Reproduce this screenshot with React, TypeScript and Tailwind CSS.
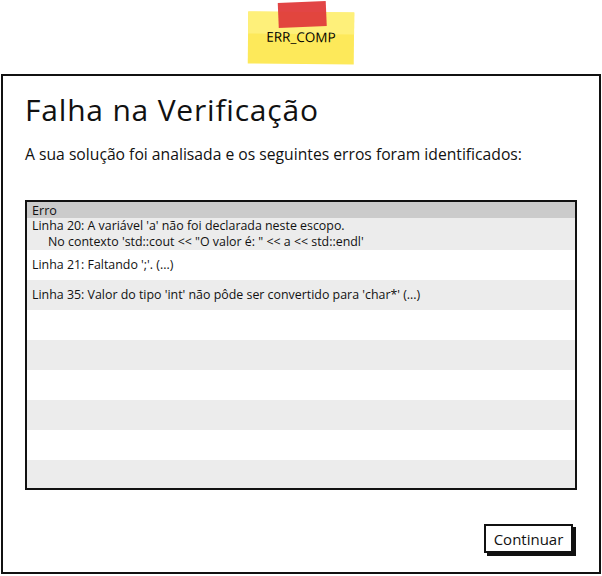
import React from "react";

type Row = { lines: string[]; shaded: boolean; height: string };

const rows: Row[] = [
  {
    lines: [
      "Linha 20: A variável 'a' não foi declarada neste escopo.",
      "No contexto 'std::cout << \"O valor é: \" << a << std::endl'",
    ],
    shaded: true,
    height: "h-[32px]",
  },
  { lines: ["Linha 21: Faltando ';'. (...)"], shaded: false, height: "h-[30px]" },
  {
    lines: ["Linha 35: Valor do tipo 'int' não pôde ser convertido para 'char*' (...)"],
    shaded: true,
    height: "h-[30px]",
  },
  { lines: [], shaded: false, height: "h-[30px]" },
  { lines: [], shaded: true, height: "h-[30px]" },
  { lines: [], shaded: false, height: "h-[30px]" },
  { lines: [], shaded: true, height: "h-[30px]" },
  { lines: [], shaded: false, height: "h-[30px]" },
  { lines: [], shaded: true, height: "h-[28px]" },
];

function StickyNote() {
  return (
    <div className="relative mt-[12px] h-[52px] w-[106px] rotate-[0.6deg] bg-[#fde95a]">
      <div className="h-[22px] w-full bg-[#fef07a]" />
      <div className="absolute left-[30px] top-[-10px] h-[25px] w-[48px] -rotate-[3deg] bg-[#e03b3b] opacity-95" />
      <div className="absolute inset-x-0 top-[17px] text-center text-[13.5px] leading-[16px] text-black">
        ERR_COMP
      </div>
    </div>
  );
}

export default function App() {
  return (
    <div className="relative h-[576px] w-[602px] overflow-hidden bg-white font-['Open_Sans',sans-serif] text-[#111]">
      <div className="flex h-[74px] justify-center">
        <StickyNote />
      </div>

      <div className="ml-[1px] flex h-[500px] w-[600px] flex-col border-2 border-[#111] pl-[22px] pr-[22px]">
        <h1 className="mt-[15px] text-[30px] leading-[38px] tracking-[0.8px]">Falha na Verificação</h1>
        <p className="mt-[15px] text-[15.7px] leading-[20px]">
          A sua solução foi analisada e os seguintes erros foram identificados:
        </p>

        <div className="mt-[36px] h-[290px] w-[552px] border-2 border-[#111]">
          <div className="flex h-[16px] items-center bg-[#cbcbcb] pl-[5px] text-[12.6px] leading-[15px]">
            Erro
          </div>
          {rows.map((row, i) => (
            <div
              key={i}
              className={`flex flex-col justify-center pl-[5px] text-[12.4px] ${
                row.lines.length > 1 ? "leading-[16px]" : "pb-[2px] leading-[15px]"
              } ${row.height} ${row.shaded ? "bg-[#ececec]" : "bg-white"}`}
            >
              {row.lines.map((line, j) => (
                <div key={j} className={j > 0 ? "pl-[16px]" : ""}>
                  {line}
                </div>
              ))}
            </div>
          ))}
        </div>

        <div className="mt-auto mb-[19px] flex justify-end pr-[4px]">
          <button
            type="button"
            className="h-[29px] w-[89px] border-2 border-[#111] bg-white text-[15px] leading-[18px] shadow-[3px_3px_0_#111]"
          >
            Continuar
          </button>
        </div>
      </div>
    </div>
  );
}
